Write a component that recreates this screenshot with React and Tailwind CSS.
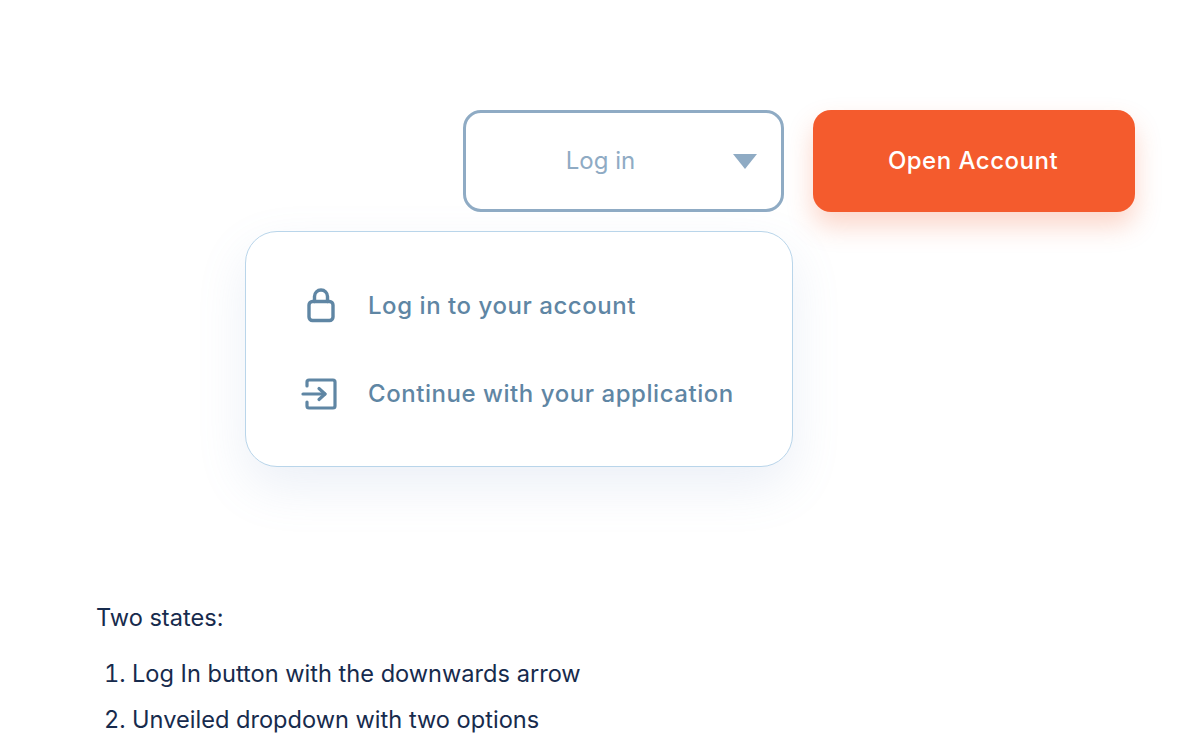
import React from 'react';

const LockIcon = () => (
  <svg width="30" height="36" viewBox="0 0 30 36" fill="none" stroke="#5f86a4" strokeWidth="3.4" strokeLinecap="round" strokeLinejoin="round" className="block ml-[6px]">
    <rect x="3" y="13.5" width="24" height="19" rx="3.5" />
    <path d="M8.5 13.5V8.5a6.5 6.5 0 0 1 13 0v5" />
  </svg>
);

const EnterIcon = () => (
  <svg width="36" height="32" viewBox="0 0 36 32" fill="none" stroke="#5f86a4" strokeWidth="3.2" strokeLinecap="round" strokeLinejoin="round" className="block ml-[1px]">
    <path d="M6 8V4a2 2 0 0 1 2-2h24a2 2 0 0 1 2 2v24a2 2 0 0 1-2 2H8a2 2 0 0 1-2-2v-4" />
    <path d="M2 16h22" />
    <path d="M18 10.5l6 5.5-6 5.5" />
  </svg>
);

const MenuItem = ({ icon, label }) => (
  <div className="flex items-center h-[40px]">
    <div className="w-[122px] flex justify-start pl-[54px] shrink-0">{icon}</div>
    <span className="text-[24px] font-[450] tracking-[0.55px] text-[#5f86a4] font-['Inter',sans-serif]">{label}</span>
  </div>
);

export default function App() {
  return (
    <div className="w-[1200px] h-[751px] overflow-hidden bg-white font-['Inter',sans-serif]">
      <div className="flex justify-end gap-[29px] pt-[110px] pr-[65px]">
        <button className="relative w-[321px] h-[102px] border-[3px] border-[#8fabc4] rounded-[18px] bg-white flex items-center justify-center pr-[46px] text-[24px] text-[#8fabc4] font-['Inter',sans-serif]">
          Log in
          <svg width="24" height="15" viewBox="0 0 24 15" className="absolute right-[24px] top-[41px]">
            <path d="M0 0h24L12 15z" fill="#8fabc4" />
          </svg>
        </button>
        <button className="w-[322px] h-[102px] pr-[2px] rounded-[18px] bg-[#f45b2d] text-white text-[24px] font-[450] tracking-[0.5px] font-['Inter',sans-serif] shadow-[0_14px_26px_rgba(245,91,45,0.25)]">
          Open Account
        </button>
      </div>

      <div className="ml-[245px] mt-[19px] w-[548px] h-[236px] rounded-[32px] border-[1.5px] border-[#b9d5ea] bg-white shadow-[0_20px_50px_rgba(120,150,200,0.14)] flex flex-col justify-center gap-[48px] pt-[2px]">
        <MenuItem icon={<LockIcon />} label="Log in to your account" />
        <MenuItem icon={<EnterIcon />} label="Continue with your application" />
      </div>

      <div className="ml-[96px] mt-[133px] text-[#172b4d] text-[23.6px]">
        <p className="leading-[36px]">Two states:</p>
        <ol className="mt-[20px] list-decimal pl-[36px] space-y-[10px]">
          <li className="leading-[36px]">Log In button with the downwards arrow</li>
          <li className="leading-[36px]">Unveiled dropdown with two options</li>
        </ol>
      </div>
    </div>
  );
}
